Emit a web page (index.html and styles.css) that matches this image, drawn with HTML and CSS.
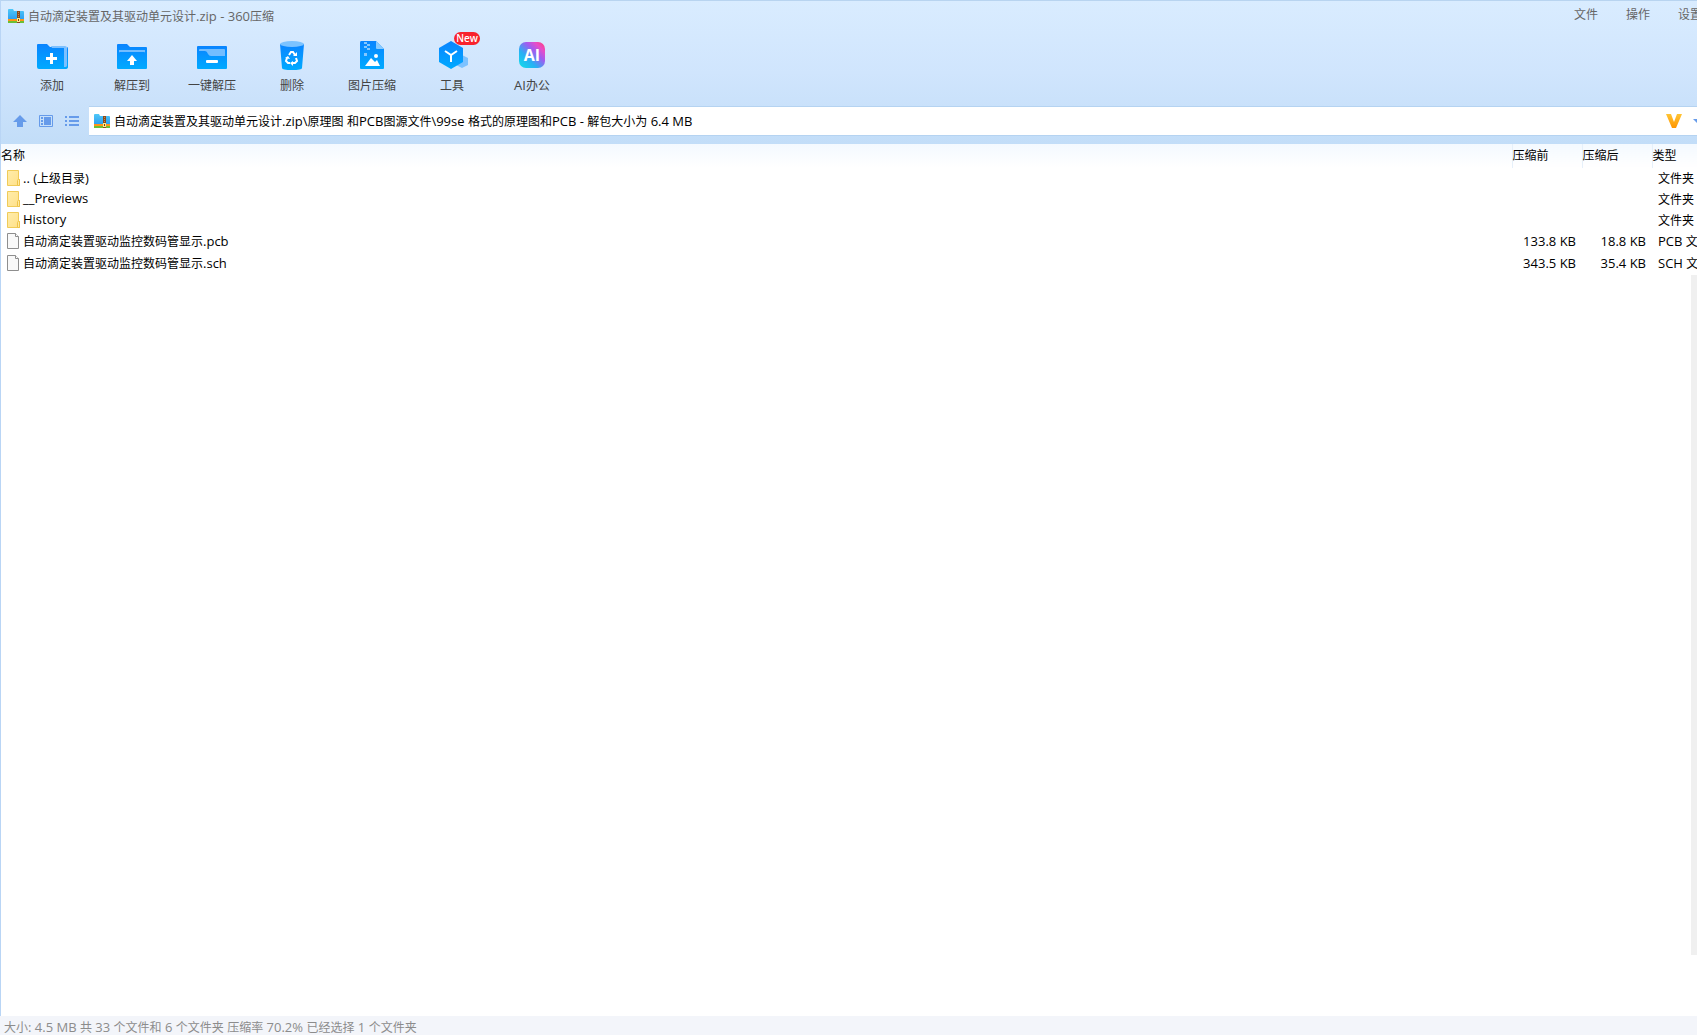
FILE: index.html
```html
<!DOCTYPE html>
<html lang="zh-CN">
<head>
<meta charset="utf-8">
<title>自动滴定装置及其驱动单元设计.zip - 360压缩</title>
<link rel="stylesheet" href="styles.css">
</head>
<body>
<svg class="defs" aria-hidden="true">
  <defs>
    <linearGradient id="blue" x1="0" y1="0" x2="0" y2="1"><stop offset="0" stop-color="#0a84ff"/><stop offset="1" stop-color="#00aaff"/></linearGradient>
    <linearGradient id="gold" x1="0" y1="0" x2="0" y2="1"><stop offset="0" stop-color="#ffc535"/><stop offset="1" stop-color="#ff9500"/></linearGradient>
    <linearGradient id="sky" x1="0" y1="0" x2="0" y2="1"><stop offset="0" stop-color="#4fc8f8"/><stop offset="1" stop-color="#2b9cf0"/></linearGradient>
    <linearGradient id="ai" x1="0" y1="1" x2="1" y2="0"><stop offset="0" stop-color="#10e0e8"/><stop offset=".35" stop-color="#28b0f4"/><stop offset=".62" stop-color="#a05cf0"/><stop offset=".8" stop-color="#e84cc8"/><stop offset="1" stop-color="#ff3d70"/></linearGradient>
    <linearGradient id="paper" x1="0" y1="0" x2="1" y2="1"><stop offset="0" stop-color="#ffedab"/><stop offset="1" stop-color="#ffe088"/></linearGradient>
    <symbol id="zip" viewBox="0 0 16 14">
      <path d="M0 1q0-1 1-1h4l1 2h9q1 0 1 1v8H0z" fill="url(#sky)"/>
      <path d="M0 10h16v2H0z" fill="#ff9417"/><path d="M0 12h16v2H0z" fill="#6bbf35"/>
      <path d="M9 2h3v12H9z" fill="#8b4a1c"/><path d="M10 3h1v1h-1zM10 5h1v1h-1zM10 7h1v1h-1z" fill="#c08850"/>
      <path d="M9 9h3v4H9z" fill="#ffe98c"/><path d="M10 10h1v2h-1z" fill="#704010"/>
    </symbol>
    <symbol id="folder" viewBox="0 0 13 16">
      <path d="M.5.5h11v9h1v6H.5z" fill="url(#paper)" stroke="#f0cb58"/><path d="M10.500 15.500v-5q0-1 1-1h1v6z" fill="#ffe9a0" stroke="#eec44a"/>
    </symbol>
    <symbol id="page" viewBox="0 0 13 16">
      <path d="M.5.5h8l3 3v12H.5z" fill="#f9f9f9" stroke="#8e8e8e"/><path d="M8.500.5v3h3" fill="#fff" stroke="#8e8e8e"/>
    </symbol>
  </defs>
</svg>
<div class="window">
  <header class="top">
    <div class="titlebar">
      <svg class="zip"><use href="#zip"/></svg>
      <h1 class="title">自动滴定装置及其驱动单元设计<span class="en">.zip - 360</span>压缩</h1>
      <nav class="menu">
        <button type="button">文件</button>
        <button type="button">操作</button>
        <button type="button">设置</button>
      </nav>
    </div>
    <div class="toolbar">
      <button type="button" class="tool">
        <svg class="tool-icon" viewBox="0 0 34 34"><path d="M2 7q0-1 1-1h9l3 3h14q1 0 1 1v19q0 2-2 2H4q-2 0-2-2z" fill="url(#blue)"/><path d="M16 8h14q2 0 2 2v17q0 2-2 2h-1V10H17z" fill="#7cc0ff"/><path d="M32 9q1 0 1 2v18q0 2-3 2H5v-2h25q2 0 2-2z" fill="url(#blue)"/><path d="M16.500 15v11M11 20.500h11" stroke="#fff" stroke-width="3"/></svg>
        <span>添加</span>
      </button>
      <button type="button" class="tool">
        <svg class="tool-icon" viewBox="0 0 34 34"><path d="M2 7q0-1 1-1h9l3 3h16q1 0 1 1v20q0 1-1 1H3q-1 0-1-1z" fill="url(#blue)"/><path d="M4 15v-2q0-1 1-1h24q1 0 1 1v2q0-1-1-1H5q-1 0-1 1z" fill="#73bdff"/><path d="M4 12h26v2H4z" fill="#73bdff"/><path d="M17 17l5 6h-3v4h-4v-4h-3z" fill="#fff"/></svg>
        <span>解压到</span>
      </button>
      <button type="button" class="tool">
        <svg class="tool-icon" viewBox="0 0 34 34"><rect x="2" y="8" width="30" height="23" rx="1" fill="url(#blue)"/><path d="M4 13v-1q0-1 1-1h24q1 0 1 1v6H16q-2 0-3-2-1-3-3-3z" fill="#73bdff"/><rect x="11" y="22" width="12" height="3" rx="1" fill="#fff"/></svg>
        <span>一键解压</span>
      </button>
      <button type="button" class="tool">
        <svg class="tool-icon" viewBox="0 0 34 34"><path d="M5 6h24l-2 24q0 2-10 2T7 30z" fill="url(#blue)"/><ellipse cx="17" cy="6" rx="12" ry="3" fill="#7cc3ff"/><path d="M14 17l2-3h2l2 3M21 20l1 3-2 2h-2M15 25h-2l-2-2 1-3" fill="none" stroke="#fff" stroke-width="2"/><path d="M18 18h4v-4zM18 23v5l-3-3zM10 20l3-2 2 3z" fill="#fff"/></svg>
        <span>删除</span>
      </button>
      <button type="button" class="tool">
        <svg class="tool-icon" viewBox="0 0 34 34"><path d="M5 5q0-2 1-2h15l8 8v19q0 1-1 1H6q-1 0-1-1z" fill="url(#blue)"/><path d="M21 3l8 8h-7q-1 0-1-1z" fill="#8acbff"/><path d="M9 4h3v2H9zM12 6h3v2h-3zM9 8h3v2H9zM12 10h3v2h-3zM9 15h3v3H9z" fill="#85c7ff"/><path d="M10 28l6-8 4 4 2-2 3 6z" fill="#fff"/><circle cx="21" cy="18" r="2" fill="#fff"/></svg>
        <span>图片压缩</span>
      </button>
      <button type="button" class="tool">
        <svg class="tool-icon" viewBox="0 0 34 34"><path d="M27 17l6 3v7l-6 3-6-3z" fill="#7dc2ff"/><path d="M16 3l12 7v14l-12 7-12-7V10z" fill="url(#blue)"/><path d="M10 13l6 4 6-4M16 17v7" fill="none" stroke="#fff" stroke-width="2"/></svg>
        <span>工具</span>
        <span class="badge">New</span>
      </button>
      <button type="button" class="tool">
        <svg class="tool-icon" viewBox="0 0 34 34"><rect x="4" y="4" width="26" height="26" rx="7" fill="url(#ai)"/><text x="17" y="23" text-anchor="middle" class="ai-text">AI</text></svg>
        <span><span class="en">AI</span>办公</span>
      </button>
    </div>
    <div class="address">
      <div class="nav">
        <button type="button" aria-label="向上"><svg viewBox="0 0 15 14"><path d="M7 1l7 7H10v5H4V8H0z" fill="#669bea"/></svg></button>
        <button type="button" aria-label="预览"><svg viewBox="0 0 15 14"><path d="M.5 1.500h13v11H.5z" fill="none" stroke="#669bea"/><path d="M5 3h7v8H5zM2 3h2v2H2zM2 6h2v2H2zM2 9h2v2H2z" fill="#669bea"/></svg></button>
        <button type="button" aria-label="列表"><svg viewBox="0 0 15 14"><path d="M0 2h2v2H0zM4 2h10v2H4zM0 6h2v2H0zM4 6h10v2H4zM0 10h2v2H0zM4 10h10v2H4z" fill="#669bea"/></svg></button>
      </div>
      <div class="path">
        <svg class="zip"><use href="#zip"/></svg>
        <span class="path-text">自动滴定装置及其驱动单元设计<span class="en">.zip\</span>原理图<span class="en"> </span>和<span class="en">PCB</span>图源文件<span class="en">\99se </span>格式的原理图和<span class="en">PCB - </span>解包大小为<span class="en"> 6.4 MB</span></span>
        <svg class="vip" viewBox="0 0 16 14"><path d="M0 0h5l3 8 3-8h5l-6 14H6z" fill="url(#gold)"/></svg>
        <svg class="drop" viewBox="0 0 8 4"><path d="M0 0h8L4 4z" fill="#669bea"/></svg>
      </div>
    </div>
  </header>
  <main class="files">
    <table>
      <colgroup><col><col class="size"><col class="size"><col class="type"></colgroup>
      <thead><tr><th>名称</th><th>压缩前</th><th>压缩后</th><th>类型</th></tr></thead>
      <tbody>
        <tr><td><span class="name"><svg><use href="#folder"/></svg><span><span class="en">.. (</span>上级目录<span class="en">)</span></span></span></td><td></td><td></td><td>文件夹</td></tr>
        <tr><td><span class="name"><svg><use href="#folder"/></svg><span class="en">__Previews</span></span></td><td></td><td></td><td>文件夹</td></tr>
        <tr><td><span class="name"><svg><use href="#folder"/></svg><span class="en">History</span></span></td><td></td><td></td><td>文件夹</td></tr>
        <tr><td><span class="name"><svg><use href="#page"/></svg><span>自动滴定装置驱动监控数码管显示<span class="en">.pcb</span></span></span></td><td class="en">133.8 KB</td><td class="en">18.8 KB</td><td><span class="en">PCB </span>文件</td></tr>
        <tr><td><span class="name"><svg><use href="#page"/></svg><span>自动滴定装置驱动监控数码管显示<span class="en">.sch</span></span></span></td><td class="en">343.5 KB</td><td class="en">35.4 KB</td><td><span class="en">SCH </span>文件</td></tr>
      </tbody>
    </table>
    <div class="track"></div>
  </main>
  <footer class="status">大小<span class="en">: 4.5 MB </span>共<span class="en"> 33 </span>个文件和<span class="en"> 6 </span>个文件夹<span class="en"> </span>压缩率<span class="en"> 70.2% </span>已经选择<span class="en"> 1 </span>个文件夹</footer>
</div>
</body>
</html>
```
FILE: styles.css
```css
* { box-sizing: border-box; }
body {
  margin: 0;
  overflow: hidden;
  font: 12px/20px "Noto Sans CJK SC", sans-serif;
  color: #000;
}
.defs { position: absolute; width: 0; height: 0; }
.en { font-family: "Open Sans", "Noto Sans CJK SC", sans-serif; font-size: 13px; white-space: pre; }
button { padding: 0; border: 0; background: none; font: inherit; color: inherit; white-space: nowrap; }
.window { display: flex; flex-direction: column; min-height: 100vh; }
.zip { flex: none; width: 16px; height: 14px; }

.top {
  border-top: 1px solid #b8d4f0;
  border-left: 1px solid #b9d5f5;
  background: linear-gradient(#d9ecff, #d0e5fd 50%, #c2ddf8);
}
.titlebar { display: flex; align-items: center; height: 30px; padding-left: 7px; color: #666; }
.title { flex: 1; margin: 0 0 0 4px; font-size: 12px; font-weight: 400; line-height: 20px; }
.menu { display: flex; gap: 28px; height: 24px; margin-bottom: 4px; }
.menu button { width: 24px; }
.menu button:last-child { width: 19px; display: flex; align-items: center; }
.toolbar { display: flex; padding-left: 11px; height: 75px; color: #444; }
.tool { position: relative; display: flex; flex-direction: column; align-items: center; gap: 1px; width: 80px; padding-top: 5px; }
.tool-icon { width: 34px; height: 38px; }
.ai-text { font: 700 16px "Open Sans", sans-serif; fill: #fff; }
.badge {
  position: absolute; left: 42px; top: 1px; width: 26px; height: 13px;
  border-radius: 7px; background: #f8222c; color: #fff;
  font: 600 10px/13px "Open Sans", sans-serif; text-align: center;
}
.address { display: flex; padding-bottom: 8px; }
.nav { display: flex; align-items: center; gap: 11px; width: 88px; padding-left: 12px; }
.nav button, .nav svg { display: block; width: 15px; height: 14px; }
.path {
  flex: 1; display: flex; align-items: center; height: 30px; padding-left: 5px; overflow: hidden;
  border-top: 1px solid #b5d3f1; border-bottom: 1px solid #b5d3f1; background: #fff;
}
.path-text { flex: 1; margin-left: 4px; padding-bottom: 1px; white-space: nowrap; }
.vip { width: 16px; height: 14px; margin-right: 11px; }
.drop { width: 8px; height: 4px; margin-right: -4px; }

.files { flex: 1; display: flex; flex-direction: column; border-left: 1px solid #b9d5f5; overflow: hidden; }
table { width: 100%; table-layout: fixed; border-collapse: collapse; }
.size { width: 70px; }
.type { width: 45px; }
th { height: 24px; padding: 0 0 2px; text-align: left; font-weight: 400; background: linear-gradient(#f3f9ff, #fff); }
th + th { border-left: 1px solid #e6f0fa; }
td { height: 21px; padding: 0 0 2px; line-height: 19px; white-space: nowrap; overflow: hidden; }
td:nth-child(2), td:nth-child(3) { padding-right: 6px; text-align: right; }
td:nth-child(4) { padding-left: 6px; }
.name { display: flex; align-items: center; gap: 3px; height: 19px; padding-left: 6px; }
.name svg { width: 13px; height: 16px; }
.track { align-self: flex-end; flex: 1; width: 6px; margin-bottom: 61px; background: #f0f0f0; }
.status { height: 19px; padding-left: 4px; overflow: hidden; background: #f3f5fa; color: #8c8c8c; line-height: 22px; }
```
